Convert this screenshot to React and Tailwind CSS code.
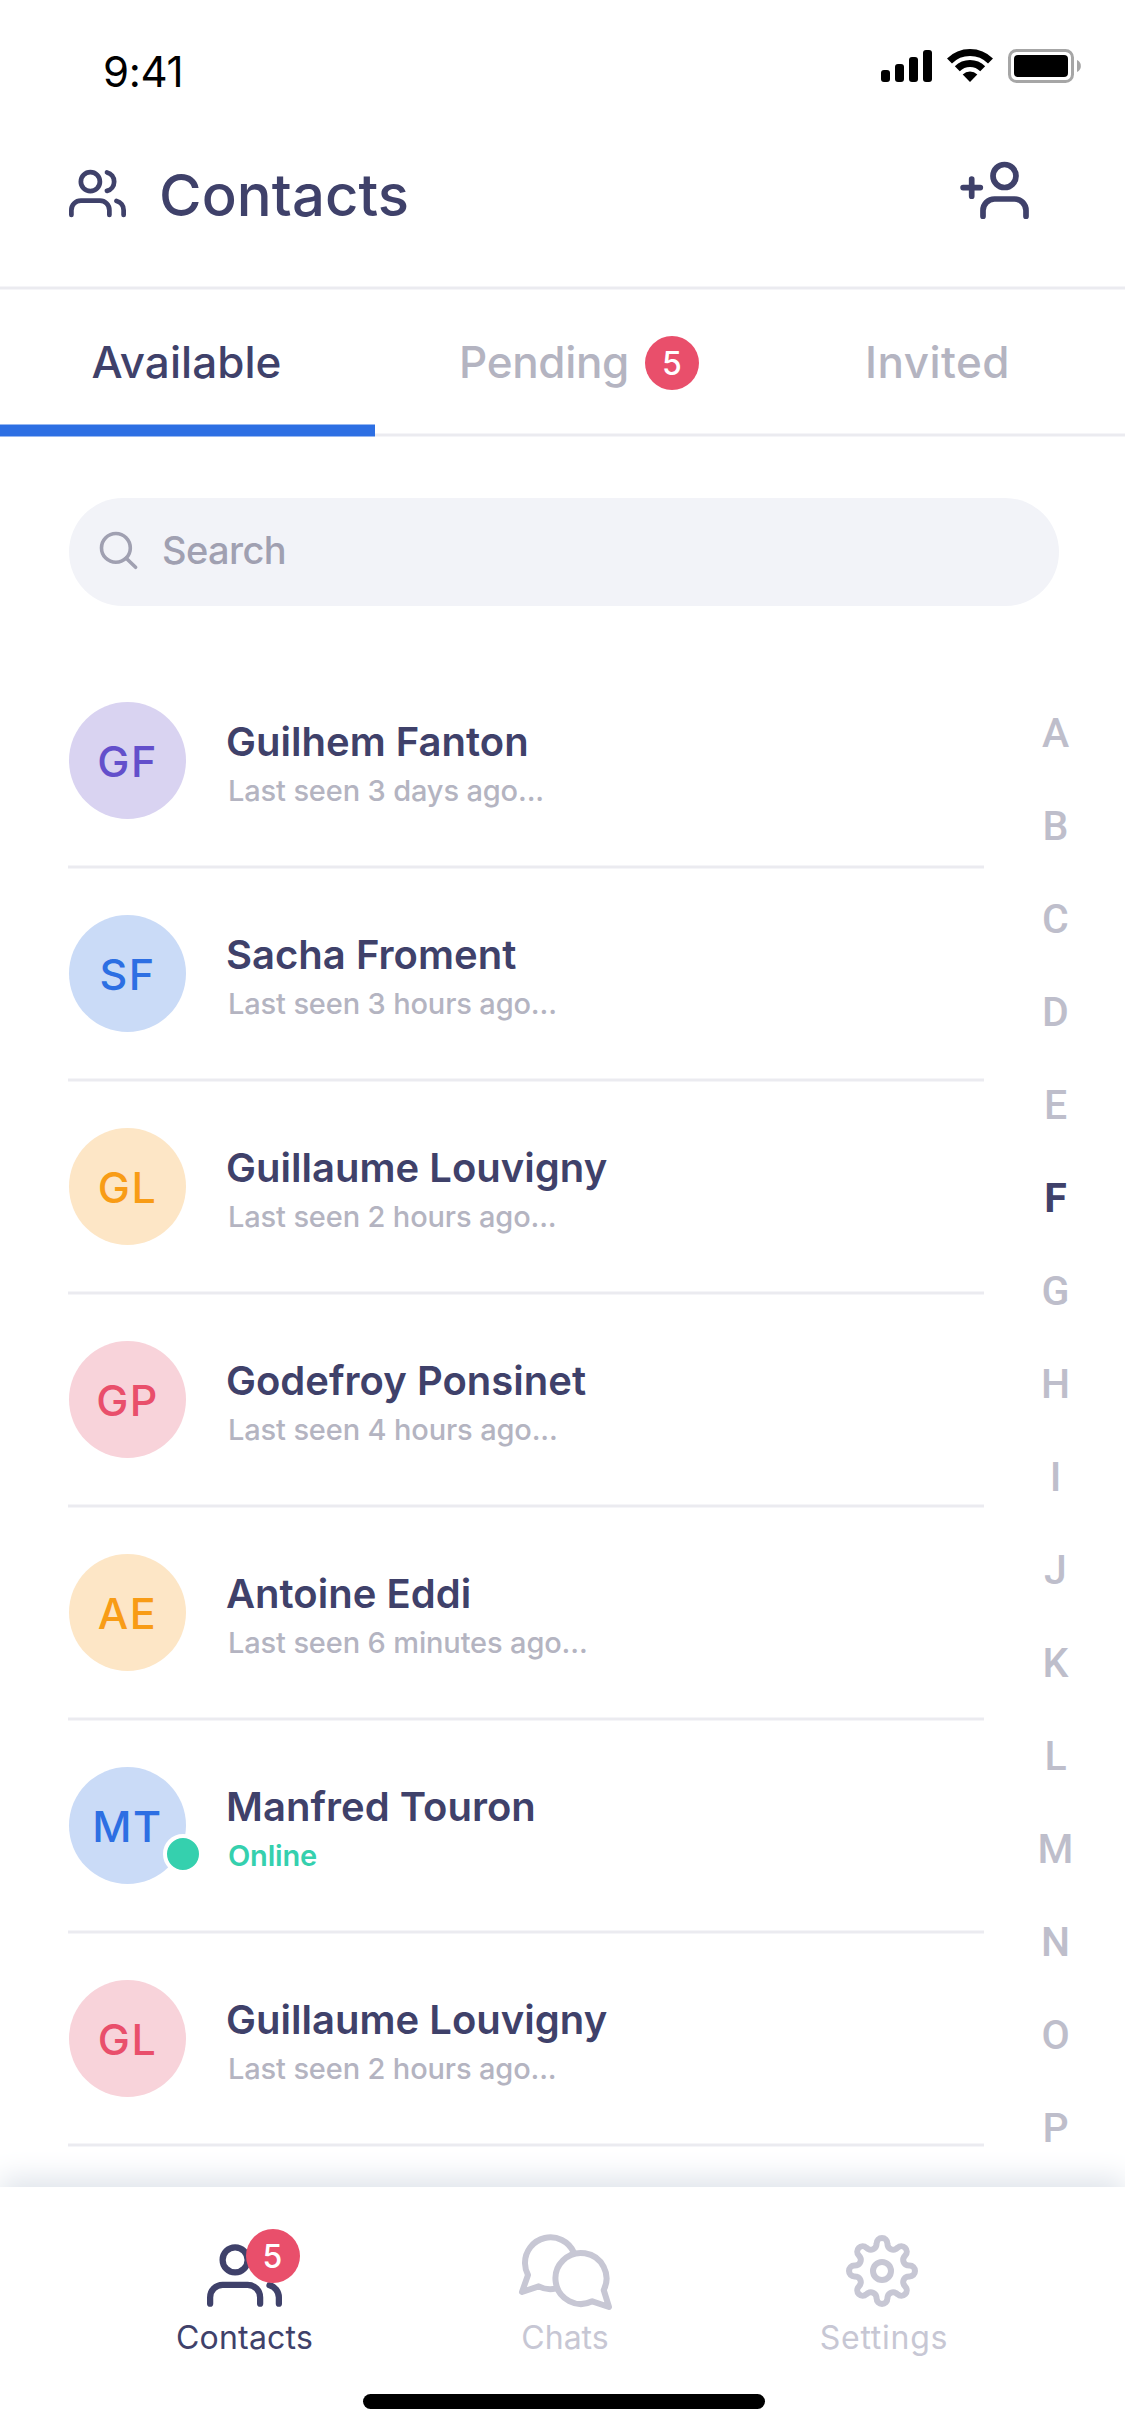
import React from "react";

const CONTACTS = [
  { initials: "GF", name: "Guilhem Fanton", seen: "Last seen 3 days ago...", tone: "bg-[#d9d3f1] text-[#634fcb]" },
  { initials: "SF", name: "Sacha Froment", seen: "Last seen 3 hours ago...", tone: "bg-[#cadbf7] text-[#2d6fe3]" },
  { initials: "GL", name: "Guillaume Louvigny", seen: "Last seen 2 hours ago...", tone: "bg-[#fde6c6] text-[#f89c16]" },
  { initials: "GP", name: "Godefroy Ponsinet", seen: "Last seen 4 hours ago...", tone: "bg-[#f8d3da] text-[#e94f6b]" },
  { initials: "AE", name: "Antoine Eddi", seen: "Last seen 6 minutes ago...", tone: "bg-[#fde6c6] text-[#f89c16]" },
  { initials: "MT", name: "Manfred Touron", seen: "Online", online: true, tone: "bg-[#cadbf7] text-[#2d6fe3]" },
  { initials: "GL", name: "Guillaume Louvigny", seen: "Last seen 2 hours ago...", tone: "bg-[#f8d3da] text-[#e94f6b]" },
];

const LETTERS = "ABCDEFGHIJKLMNOP".split("");

// Outline of an eight-toothed gear centred on the origin.
const GEAR_PATH = (() => {
  const at = (x, y, k) => {
    const a = (k * Math.PI) / 4;
    const px = x * Math.cos(a) - y * Math.sin(a);
    const py = x * Math.sin(a) + y * Math.cos(a);
    return `${px.toFixed(2)} ${py.toFixed(2)}`;
  };
  let d = `M${at(-5.4, -27.6, 0)}`;
  for (let k = 0; k < 8; k++) {
    d += `A5.4 5.4 0 0 1 ${at(5.4, -27.6, k)}L${at(5.7, -25.4, k)}A5.6 5.6 0 0 0 ${at(-5.7, -25.4, k + 1)}L${at(-5.4, -27.6, k + 1)}`;
  }
  return d + "Z";
})();

function Stroke({ width, ...props }) {
  return <svg fill="none" stroke="currentColor" strokeWidth={width} strokeLinecap="round" strokeLinejoin="round" {...props} />;
}

function UsersIcon({ className }) {
  return (
    <Stroke width="2" viewBox="0 0 24 24" className={className}>
      <path d="M17 21v-2a4 4 0 0 0-4-4H5a4 4 0 0 0-4 4v2" />
      <circle cx="9" cy="7" r="4" />
      <path d="M23 21v-2a4 4 0 0 0-3-3.87" />
      <path d="M16 3.13a4 4 0 0 1 0 7.75" />
    </Stroke>
  );
}

function AddUserIcon({ className }) {
  return (
    <Stroke width="5.7" viewBox="0 0 73 61" className={className}>
      <circle cx="46.5" cy="16" r="11.5" />
      <path d="M25 56.2v-5.7a11.5 11.5 0 0 1 11.5-11.5h20a11.5 11.5 0 0 1 11.5 11.5v5.7" />
      <path d="M13.7 19v17.2M5.1 27.6h17.2" />
    </Stroke>
  );
}

function StatusIcons({ className }) {
  return (
    <svg viewBox="880 48 204 36" className={className}>
      <rect x="881" y="70" width="9" height="12" rx="3" />
      <rect x="895" y="64" width="9" height="18" rx="3" />
      <rect x="909" y="57" width="9" height="25" rx="3" />
      <rect x="923" y="50" width="9" height="32" rx="3" />
      <g fill="none" stroke="#000" strokeWidth="7">
        <path d="M949.5 61A29 29 0 0 1 990.5 61" />
        <path d="M957.3 68.8A18 18 0 0 1 982.7 68.8" />
      </g>
      <path d="M970 82L962.7 74.6A10.4 10.4 0 0 1 977.3 74.6Z" />
      <rect x="1009.5" y="50.5" width="63" height="31" rx="7" fill="none" stroke="#a6a6a6" strokeWidth="3" />
      <rect x="1014" y="55" width="54" height="22" rx="4" />
      <path d="M1077 60a6.6 6.6 0 0 1 0 12z" fill="#a6a6a6" />
    </svg>
  );
}

function Badge({ className = "" }) {
  return (
    <span className={`flex h-[54px] w-[54px] items-center justify-center rounded-full bg-[#e94f6b] pt-px text-[32px] leading-[53px] font-medium text-white ${className}`}>
      5
    </span>
  );
}

function Rule() {
  return <div className="h-1 border-y border-[#f5f5f8] bg-[#ebebf0]" />;
}

function ContactRow({ initials, name, seen, online, tone }) {
  return (
    <li className="h-[213px]">
      <div className="flex h-[209px] items-center pl-px">
        <div className={`relative flex h-[117px] w-[117px] items-center justify-center rounded-full pt-0.5 text-[43px] font-medium tracking-[1.5px] ${tone}`}>
          {initials}
          {online && <span className="absolute top-[67px] left-[94px] h-10 w-10 rounded-full border-4 border-white bg-[#35d0ae]" />}
        </div>
        <div className="ml-10 pt-1.5">
          <p className="text-[40px] leading-[48px] font-semibold tracking-[0.02px]">{name}</p>
          <p className={`mt-[7px] pl-[2px] text-[29px] leading-9 ${online ? "font-semibold tracking-[-0.19px] text-[#35d0ae]" : "font-medium tracking-[-0.14px] text-[#b4b4c1]"}`}>{seen}</p>
        </div>
      </div>
      <Rule />
    </li>
  );
}

export default function App() {
  return (
    <div className="flex h-[2436px] w-[1125px] flex-col overflow-hidden bg-white font-[Inter,sans-serif] text-[#3f416a]">
      <div className="flex h-[142px] shrink-0 items-center justify-between pr-[41px] pl-[103px] text-black">
        <span className="text-[42px] tracking-[-0.3px]">9:41</span>
        <StatusIcons className="mb-[10px] h-9 w-[204px]" />
      </div>

      <header className="flex h-36 shrink-0 items-center pr-[94px] pb-[38px] pl-[69px]">
        <UsersIcon className="mb-[3px] h-[57px] w-[57px]" />
        <h1 className="ml-[33px] text-[58px] leading-[68px] font-medium tracking-[0.1px]">Contacts</h1>
        <AddUserIcon className="mb-[9px] ml-auto h-[61px] w-[73px]" />
      </header>
      <Rule />

      <nav className="grid h-[143px] shrink-0 grid-cols-3 text-[44px] font-medium text-[#b4b4c1]">
        <div className="relative flex items-center justify-center pt-px pr-[2px] tracking-[0.04px] text-[#3f416a]">
          Available
          <div className="absolute inset-x-0 -bottom-1 z-10 h-[13px] border-y border-[#96b7f1] bg-[#2d6fe3]" />
        </div>
        <div className="flex items-center justify-center gap-4 pt-px pl-[33px] tracking-[-0.34px]">
          Pending
          <Badge className="mt-px tracking-normal" />
        </div>
        <div className="flex items-center justify-center pt-px tracking-[0.45px]">Invited</div>
      </nav>
      <Rule />

      <div className="mt-[61px] mr-[66px] ml-[69px] flex h-[108px] shrink-0 items-center rounded-full bg-[#f2f3f8] pl-[29px] text-[#a0a0b1]">
        <Stroke width="3.6" viewBox="0 0 41 41" className="mb-[3px] h-[41px] w-[41px]">
          <circle cx="17.9" cy="17.9" r="14.4" />
          <path d="M28.2 28.2L37.6 37.3" />
        </Stroke>
        <span className="mb-[3px] ml-[23px] text-[38px] font-medium tracking-[-0.6px]">Search</span>
      </div>

      <main className="flex h-[1581px] shrink-0">
        <ul className="ml-[68px] w-[916px] shrink-0 pt-[50px]">
          {CONTACTS.map((c, i) => (
            <ContactRow key={i} {...c} />
          ))}
        </ul>
        <ol className="w-[141px] pt-[81px] pl-[2px] text-center font-[Roboto,sans-serif] text-[41px] font-medium text-[#bebecb]">
          {LETTERS.map((l) => (
            <li key={l} className={`h-[93px] leading-[93px] ${l === "F" ? "font-bold text-[#3f416a]" : ""}`}>{l}</li>
          ))}
        </ol>
      </main>

      <footer className="h-[249px] shrink-0 bg-white shadow-[0_-9px_27px_#dfe4eb]">
        <div className="ml-[85px] grid w-[957px] grid-cols-3 pt-[46px] text-[32px] leading-10 text-[#c7c7d4]">
          <div className="flex flex-col items-center tracking-[0.2px] text-[#3f416a]">
            <div className="relative h-[78px] w-[76px] pt-[5px]">
              <UsersIcon className="h-[75px] w-[75px]" />
              <Badge className="absolute -top-1 left-[39px] tracking-normal" />
            </div>
            <span className="mt-[7px]">Contacts</span>
          </div>
          <div className="flex flex-col items-center pl-[3px]">
            <Stroke width="6" viewBox="0 0 97 78" className="h-[78px] w-[97px]">
              <path d="M56.7 19.3A25.5 25.5 0 0 0 8 30.5A25.5 25.5 0 0 0 11 42L5 59L21.7 53.3A25.5 25.5 0 0 0 38.5 55.6" />
              <path d="M86.7 57A25.5 25.5 0 1 0 75.3 68.3L92 74Z" />
            </Stroke>
            <span className="mt-[7px]">Chats</span>
          </div>
          <div className="flex flex-col items-center pl-[3px] tracking-[0.75px]">
            <Stroke width="6" viewBox="-39 -38 78 78" className="mr-[4px] h-[78px] w-[78px]">
              <path d={GEAR_PATH} />
              <circle r="9" />
            </Stroke>
            <span className="mt-[7px]">Settings</span>
          </div>
        </div>
        <div className="mt-9 ml-[363px] h-[15px] w-[402px] rounded-full bg-black" />
      </footer>
    </div>
  );
}
